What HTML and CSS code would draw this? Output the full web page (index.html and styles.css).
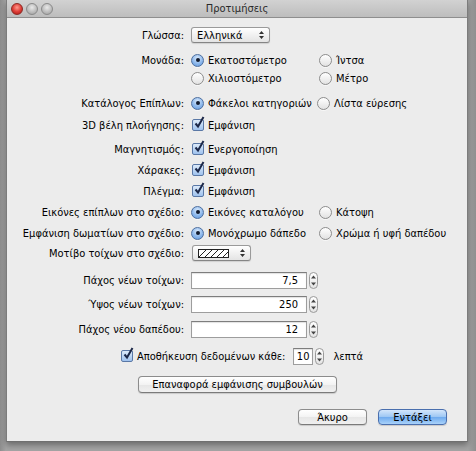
FILE: index.html
```html
<!DOCTYPE html>
<html lang="el">
<head>
<meta charset="utf-8">
<title>Προτιμήσεις</title>
<link rel="stylesheet" href="styles.css">
</head>
<body>
<div class="window">
  <div class="titlebar">
    <div class="lights">
      <span class="light red"></span>
      <span class="light"></span>
      <span class="light"></span>
    </div>
    <div class="title">Προτιμήσεις</div>
  </div>
  <div class="content">
    <div class="row">
      <div class="label">Γλώσσα:</div>
      <div class="ctrl">
        <div class="popup popup-lang"><span>Ελληνικά</span><span class="updown"><svg width="5" height="8" viewBox="0 0 5 8"><path d="M0 3 L2.5 0 L5 3 Z M0 5 L2.5 8 L5 5 Z" fill="#333"/></svg></span></div>
      </div>
    </div>
    <div class="row gap-7">
      <div class="label">Μονάδα:</div>
      <div class="ctrl opts">
        <label class="opt"><span class="radio on"></span>Εκατοστόμετρο</label>
        <label class="opt"><span class="radio"></span>Ίντσα</label>
      </div>
    </div>
    <div class="row gap-0">
      <div class="label"></div>
      <div class="ctrl opts">
        <label class="opt"><span class="radio"></span>Χιλιοστόμετρο</label>
        <label class="opt"><span class="radio"></span>Μέτρο</label>
      </div>
    </div>
    <div class="row gap-7">
      <div class="label">Κατάλογος Επίπλων:</div>
      <div class="ctrl opts opts-narrow">
        <label class="opt"><span class="radio on"></span>Φάκελοι κατηγοριών</label>
        <label class="opt"><span class="radio"></span>Λίστα εύρεσης</label>
      </div>
    </div>
    <div class="row gap-4">
      <div class="label">3D βέλη πλοήγησης:</div>
      <div class="ctrl"><label class="opt"><span class="check"><svg width="12" height="14" viewBox="0 0 12 14"><path d="M2.5 7.5 L5 10.5 L10.5 1" fill="none" stroke="#1b2748" stroke-width="2"/></svg></span>Εμφάνιση</label></div>
    </div>
    <div class="row gap-6">
      <div class="label">Μαγνητισμός:</div>
      <div class="ctrl"><label class="opt"><span class="check"><svg width="12" height="14" viewBox="0 0 12 14"><path d="M2.5 7.5 L5 10.5 L10.5 1" fill="none" stroke="#1b2748" stroke-width="2"/></svg></span>Ενεργοποίηση</label></div>
    </div>
    <div class="row gap-3">
      <div class="label">Χάρακες:</div>
      <div class="ctrl"><label class="opt"><span class="check"><svg width="12" height="14" viewBox="0 0 12 14"><path d="M2.5 7.5 L5 10.5 L10.5 1" fill="none" stroke="#1b2748" stroke-width="2"/></svg></span>Εμφάνιση</label></div>
    </div>
    <div class="row gap-3">
      <div class="label">Πλέγμα:</div>
      <div class="ctrl"><label class="opt"><span class="check"><svg width="12" height="14" viewBox="0 0 12 14"><path d="M2.5 7.5 L5 10.5 L10.5 1" fill="none" stroke="#1b2748" stroke-width="2"/></svg></span>Εμφάνιση</label></div>
    </div>
    <div class="row gap-3">
      <div class="label">Εικόνες επίπλων στο σχέδιο:</div>
      <div class="ctrl opts">
        <label class="opt"><span class="radio on"></span>Εικόνες καταλόγου</label>
        <label class="opt"><span class="radio"></span>Κάτοψη</label>
      </div>
    </div>
    <div class="row gap-3">
      <div class="label">Εμφάνιση δωματίων στο σχέδιο:</div>
      <div class="ctrl opts">
        <label class="opt"><span class="radio on"></span>Μονόχρωμο δάπεδο</label>
        <label class="opt"><span class="radio"></span>Χρώμα ή υφή δαπέδου</label>
      </div>
    </div>
    <div class="row gap-2">
      <div class="label">Μοτίβο τοίχων στο σχέδιο:</div>
      <div class="ctrl">
        <div class="popup popup-pattern"><svg class="hatch" width="31" height="9" viewBox="0 0 31 9"><rect x="0.5" y="0.5" width="30" height="8" fill="#fff" stroke="#222"/><path d="M1 8 L8 1 M7 8 L14 1 M13 8 L20 1 M19 8 L26 1 M25 8 L30 3" stroke="#222" stroke-width="1"/></svg><span class="updown"><svg width="5" height="8" viewBox="0 0 5 8"><path d="M0 3 L2.5 0 L5 3 Z M0 5 L2.5 8 L5 5 Z" fill="#333"/></svg></span></div>
      </div>
    </div>
    <div class="row gap-9">
      <div class="label">Πάχος νέων τοίχων:</div>
      <div class="ctrl fieldrow">
        <div class="field field-wide">7,5</div>
        <div class="stepper"><svg width="5" height="11" viewBox="0 0 5 11"><path d="M0 3.5 L2.5 0.5 L5 3.5 Z M0 7.5 L2.5 10.5 L5 7.5 Z" fill="#444"/></svg></div>
      </div>
    </div>
    <div class="row gap-6">
      <div class="label">Ύψος νέων τοίχων:</div>
      <div class="ctrl fieldrow">
        <div class="field field-wide">250</div>
        <div class="stepper"><svg width="5" height="11" viewBox="0 0 5 11"><path d="M0 3.5 L2.5 0.5 L5 3.5 Z M0 7.5 L2.5 10.5 L5 7.5 Z" fill="#444"/></svg></div>
      </div>
    </div>
    <div class="row gap-7">
      <div class="label">Πάχος νέου δαπέδου:</div>
      <div class="ctrl fieldrow">
        <div class="field field-wide">12</div>
        <div class="stepper"><svg width="5" height="11" viewBox="0 0 5 11"><path d="M0 3.5 L2.5 0.5 L5 3.5 Z M0 7.5 L2.5 10.5 L5 7.5 Z" fill="#444"/></svg></div>
      </div>
    </div>
    <div class="saverow gap-9">
      <label class="opt"><span class="check"><svg width="12" height="14" viewBox="0 0 12 14"><path d="M2.5 7.5 L5 10.5 L10.5 1" fill="none" stroke="#1b2748" stroke-width="2"/></svg></span>Αποθήκευση δεδομένων κάθε:</label>
      <div class="fieldrow">
        <div class="field field-small">10</div>
        <div class="stepper"><svg width="5" height="11" viewBox="0 0 5 11"><path d="M0 3.5 L2.5 0.5 L5 3.5 Z M0 7.5 L2.5 10.5 L5 7.5 Z" fill="#444"/></svg></div>
      </div>
      <span class="unit">λεπτά</span>
    </div>
    <div class="resetrow">
      <div class="btn btn-reset">Επαναφορά εμφάνισης συμβουλών</div>
    </div>
    <div class="actions">
      <div class="btn btn-action">Άκυρο</div>
      <div class="btn btn-action btn-default">Εντάξει</div>
    </div>
  </div>
</div>
</body>
</html>
```

FILE: styles.css
```css
* { box-sizing: border-box; }

html, body {
  margin: 0;
  padding: 0;
}

body {
  width: 476px;
  height: 451px;
  overflow: hidden;
  background: linear-gradient(to right, #8d8d8d 0, #a4a4a4 6px, #a4a4a4 468px, #8f8f8f 476px);
  font-family: "DejaVu Sans Condensed", "DejaVu Sans", sans-serif;
  font-stretch: condensed;
  font-size: 11px;
  color: #000;
}

.window {
  margin-left: 6px;
  width: 462px;
  height: 442px;
  background: #ececec;
  border-left: 1px solid #7c7c7c;
  border-right: 1px solid #7c7c7c;
  border-bottom: 1px solid #6f6f6f;
  box-shadow: 0 3px 6px rgba(0, 0, 0, 0.35);
}

.titlebar {
  height: 18px;
  display: flex;
  align-items: center;
  background: linear-gradient(to bottom, #d2d2d2, #bdbdbd);
  border-bottom: 1px solid #8e8e8e;
  position: relative;
}

.lights {
  display: flex;
  gap: 3px;
  padding-left: 4px;
}

.light {
  width: 12px;
  height: 12px;
  border-radius: 50%;
  background: radial-gradient(circle at 50% 35%, #e9e9e9 0, #bdbdbd 55%, #9c9c9c 100%);
  border: 1px solid #8a8a8a;
}

.light.red {
  background: radial-gradient(circle at 50% 35%, #ff9a8e 0, #e0403a 50%, #a8150f 100%);
  border-color: #8c2a24;
}

.title {
  position: absolute;
  left: 0;
  right: 0;
  top: 0;
  height: 18px;
  line-height: 17px;
  text-align: center;
  color: #2a2a2a;
  font-size: 11px;
}

.content {
  padding-top: 8px;
}

.row {
  display: grid;
  grid-template-columns: 177px 1fr;
  column-gap: 7px;
  align-items: center;
  height: 18px;
}

.gap-0 { margin-top: 0; }
.gap-2 { margin-top: 2px; }
.gap-3 { margin-top: 3px; }
.gap-4 { margin-top: 4px; }
.gap-6 { margin-top: 6px; }
.gap-7 { margin-top: 7px; }
.gap-9 { margin-top: 9px; }

.label {
  text-align: right;
  white-space: nowrap;
}

.ctrl {
  display: flex;
  align-items: center;
}

.opts {
  display: grid;
  grid-template-columns: 128px auto;
  align-items: center;
}

.opts-narrow {
  grid-template-columns: 126px auto;
}

.opt {
  display: flex;
  align-items: center;
  white-space: nowrap;
}

.radio {
  width: 13px;
  height: 13px;
  border-radius: 50%;
  margin-right: 4px;
  border: 1px solid #8c8c8c;
  background: linear-gradient(to bottom, #ffffff, #e2e2e2);
  box-shadow: 0 1px 0 rgba(255, 255, 255, 0.6);
  position: relative;
  flex: none;
}

.radio.on {
  border-color: #4e6f9f;
  background: radial-gradient(circle at 50% 30%, #d9e9fb 0, #8fb9ec 55%, #5b95dc 100%);
}

.radio.on::after {
  content: "";
  position: absolute;
  left: 3.5px;
  top: 3.5px;
  width: 4px;
  height: 4px;
  border-radius: 50%;
  background: #111a2e;
}

.check {
  width: 12px;
  height: 12px;
  margin-left: 1px;
  margin-right: 4px;
  border: 1px solid #5a78a6;
  border-radius: 2px;
  background: linear-gradient(to bottom, #dceaf9, #9fc2ee);
  position: relative;
  flex: none;
}

.check svg {
  position: absolute;
  left: 0;
  top: -4px;
}

.popup {
  height: 16px;
  display: flex;
  align-items: center;
  justify-content: space-between;
  border: 1px solid #9a9a9a;
  border-bottom-color: #858585;
  border-radius: 3px;
  background: linear-gradient(to bottom, #ffffff, #f1f1f1 50%, #e4e4e4);
  box-shadow: 0 1px 1px rgba(0, 0, 0, 0.12);
  padding: 0 5px 0 5px;
}

.popup-lang {
  width: 79px;
}

.popup-pattern {
  width: 59px;
  margin-left: 1px;
}

.hatch {
  display: block;
}

.updown {
  display: flex;
  align-items: center;
}

.updown svg {
  display: block;
}

.fieldrow {
  display: flex;
  align-items: center;
  gap: 2px;
}

.field {
  height: 17px;
  border: 1px solid #9d9d9d;
  border-top-color: #7d7d7d;
  background: #fff;
  box-shadow: inset 0 1px 1px rgba(0, 0, 0, 0.12);
  text-align: right;
  padding-right: 8px;
  line-height: 15px;
}

.field-wide {
  width: 116px;
}

.field-small {
  width: 20px;
  padding-right: 3px;
}

.stepper {
  width: 9px;
  height: 17px;
  border: 1px solid #9a9a9a;
  border-radius: 5px;
  background: linear-gradient(to bottom, #ffffff, #e4e4e4);
  display: flex;
  align-items: center;
  justify-content: center;
}

.stepper svg {
  display: block;
}

.saverow {
  display: flex;
  align-items: center;
  height: 18px;
  padding-left: 113px;
}

.saverow .opt {
  margin-right: 8px;
}

.unit {
  margin-left: 9px;
}

.resetrow {
  margin-top: 11px;
  padding-left: 131px;
  display: flex;
}

.btn {
  height: 17px;
  border: 1px solid #8c8c8c;
  border-bottom-color: #7a7a7a;
  border-radius: 4px;
  background: linear-gradient(to bottom, #ffffff, #f3f3f3 50%, #e6e6e6 51%, #f0f0f0);
  box-shadow: 0 1px 1px rgba(0, 0, 0, 0.15);
  display: flex;
  align-items: center;
  justify-content: center;
  white-space: nowrap;
}

.btn-reset {
  width: 199px;
}

.actions {
  margin-top: 16px;
  display: flex;
  justify-content: flex-end;
  gap: 11px;
  padding-right: 20px;
}

.btn-action {
  width: 69px;
  height: 16px;
}

.btn-default {
  border-color: #4a6fae;
  background: linear-gradient(to bottom, #d3e6fb, #9cc6f3 50%, #6eaaee 51%, #a9d2fa);
}
```
